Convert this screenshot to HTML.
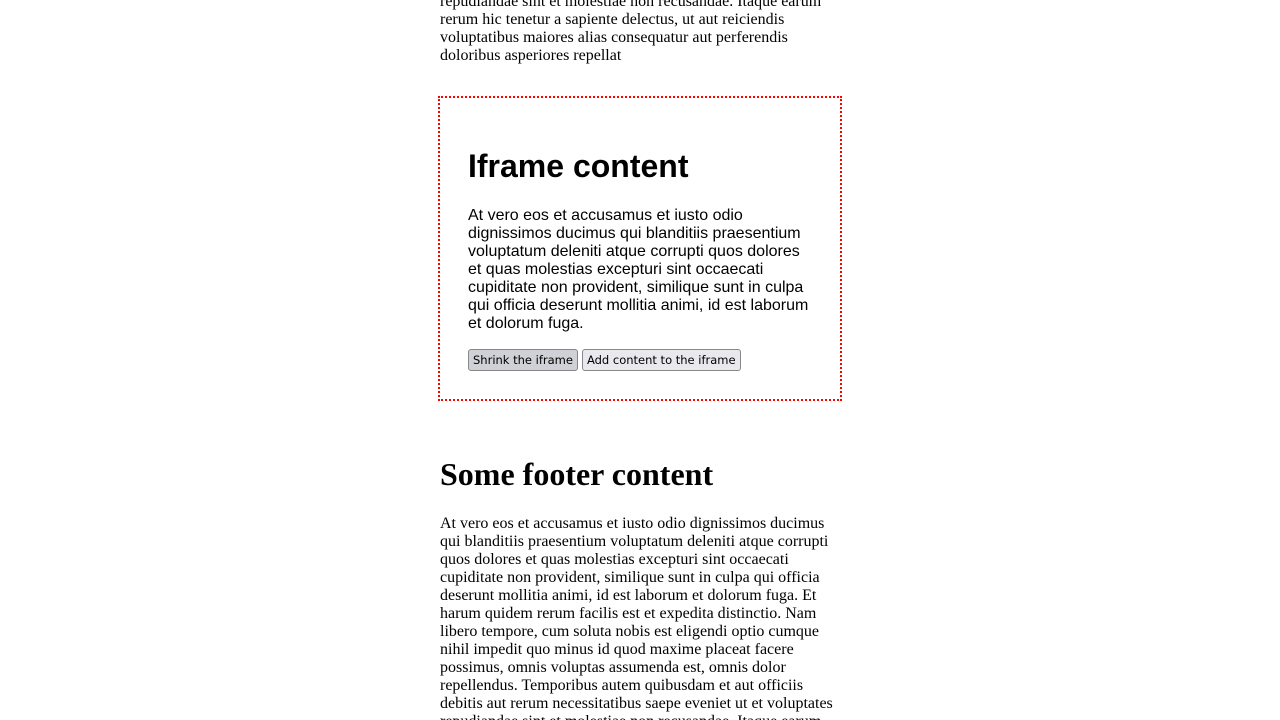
<!DOCTYPE html>
<html><head><style>
html,body{margin:0;height:720px;overflow:hidden}
body{background:#fff;font-family:"Liberation Serif",serif;font-size:16px;line-height:18px;color:#000;width:1280px;position:relative}
.a{position:absolute}
.top{left:440px;top:-7px;width:400px}
.box{left:438px;top:96px;width:400px;height:301px;border:2px dotted #f00}
h1{position:absolute;left:468px;top:146px;margin:0;font:bold 32px/40px "Liberation Sans",sans-serif}
.ip{left:468px;top:207px;width:345px;font-family:"Liberation Sans",sans-serif}
.btns{left:468px;top:349px}
button{font:11.5px/14px "DejaVu Sans",sans-serif;height:22px;padding:0 4px;border:1px solid #888;border-radius:3px;background:#e9e9ed;color:#000;margin:0;vertical-align:top}
button.s{background:#d0d0d7;margin-right:4px}
h2{position:absolute;left:440px;top:455px;margin:0;font:bold 32px/38px "Liberation Serif",serif}
.fp{left:440px;top:515px;width:396px}
</style></head><body>
<div class="a top">repudiandae sint et molestiae non recusandae. Itaque earum rerum hic tenetur a sapiente delectus, ut aut reiciendis voluptatibus maiores alias consequatur aut perferendis doloribus asperiores repellat</div>
<div class="a box"></div>
<h1>Iframe content</h1>
<div class="a ip">At vero eos et accusamus et iusto odio dignissimos ducimus qui blanditiis praesentium voluptatum deleniti atque corrupti quos dolores et quas molestias excepturi sint occaecati cupiditate non provident, similique sunt in culpa qui officia deserunt mollitia animi, id est laborum et dolorum fuga.</div>
<div class="a btns"><button class="s">Shrink the iframe</button><button>Add content to the iframe</button></div>
<h2>Some footer content</h2>
<div class="a fp">At vero eos et accusamus et iusto odio dignissimos ducimus qui blanditiis praesentium voluptatum deleniti atque corrupti quos dolores et quas molestias excepturi sint occaecati cupiditate non provident, similique sunt in culpa qui officia deserunt mollitia animi, id est laborum et dolorum fuga. Et harum quidem rerum facilis est et expedita distinctio. Nam libero tempore, cum soluta nobis est eligendi optio cumque nihil impedit quo minus id quod maxime placeat facere possimus, omnis voluptas assumenda est, omnis dolor repellendus. Temporibus autem quibusdam et aut officiis debitis aut rerum necessitatibus saepe eveniet ut et voluptates repudiandae sint et molestiae non recusandae. Itaque earum rerum hic tenetur a sapiente delectus</div>
</body></html>
